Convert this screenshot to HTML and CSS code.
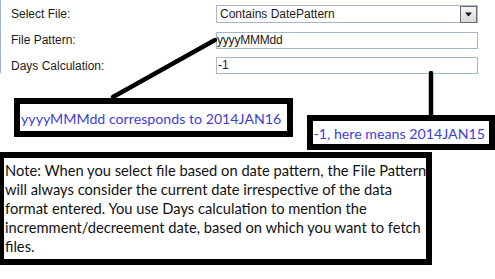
FILE: index.html
```html
<!DOCTYPE html>
<html>
<head>
<meta charset="utf-8">
<link rel="stylesheet" href="styles.css">
</head>
<body>
<div class="page">
  <div class="form">
    <div class="label">Select File:</div>
    <div class="select">
      <span class="select-text">Contains DatePattern</span>
      <span class="select-btn"><svg width="9" height="5" viewBox="0 0 9 5"><path d="M1 0.5 H8 L4.5 4.5 Z" fill="#111"/></svg></span>
    </div>
    <div class="label">File Pattern:</div>
    <div class="input first">yyyyMMMdd</div>
    <div class="label">Days Calculation:</div>
    <div class="input">-1</div>
  </div>
  <div class="callouts">
    <div class="callout one">yyyyMMMdd corresponds to 2014JAN16</div>
    <div class="callout two">-1, here means 2014JAN15</div>
  </div>
  <div class="note">Note: When you select file based on date pattern, the File Pattern<br>will always consider the current date irrespective of the data<br>format entered. You use Days calculation to mention the<br>incremment/decreement date, based on which you want to fetch<br>files.</div>
  <svg class="arrows" width="495" height="279" viewBox="0 0 495 279">
    <line x1="113" y1="97" x2="215" y2="40" stroke="#000" stroke-width="4.5" stroke-linecap="round"/>
    <line x1="431" y1="73" x2="431" y2="115" stroke="#000" stroke-width="4.5" stroke-linecap="round"/>
  </svg>
</div>
</body>
</html>
```
FILE: styles.css
```css
html, body {
  margin: 0;
  padding: 0;
  background: #fff;
}
.page {
  position: relative;
  width: 495px;
  height: 279px;
  overflow: hidden;
}
.form {
  display: grid;
  grid-template-columns: 204px 262px;
  grid-template-rows: 18px 17px 17px;
  row-gap: 8.5px;
  align-items: center;
  padding: 5px 0 0 11px;
  height: 73px;
  box-sizing: border-box;
  border-left: 1px solid #9fb4d6;
  margin-bottom: 5px;
  font-family: "Liberation Sans", Arial, sans-serif;
  font-size: 12px;
  color: #1a1a1a;
}
.form .label {
  margin-left: -1px;
}
.select {
  height: 18px;
  box-sizing: border-box;
  border: 1px solid #a7b7cb;
  display: flex;
  align-items: center;
  justify-content: space-between;
  padding-left: 3px;
}
.select-btn {
  width: 17px;
  height: 17px;
  box-sizing: border-box;
  margin-right: 0;
  border: 1px solid #6d6d6d;
  background: linear-gradient(#f4f4f4, #d8d8d8);
  display: flex;
  align-items: center;
  justify-content: center;
}
.input {
  height: 17px;
  box-sizing: border-box;
  border: 1px solid #a7b7cb;
  padding-left: 1px;
  line-height: 15px;
}
.input.first {
  padding-left: 0;
  letter-spacing: -0.2px;
}
.callouts {
  display: flex;
  align-items: flex-start;
  height: 74px;
}
.callout {
  border: 6px solid #000;
  box-sizing: border-box;
  font-family: Lato, "Noto Sans", sans-serif;
  font-size: 14.2px;
  color: #4040dc;
  white-space: nowrap;
  overflow: hidden;
}
.callout.one {
  margin: 20px 0 0 14px;
  width: 281px;
  height: 39px;
  padding: 6px 0 0 1px;
}
.callout.two {
  margin: 37px 0 0 14px;
  width: 190px;
  height: 35px;
  padding: 4px 0 0 1px;
}
.note {
  margin-left: -2px;
  width: 434px;
  height: 113px;
  box-sizing: border-box;
  border: 6px solid #000;
  padding: 3px 0 0 1px;
  font-family: Lato, "Noto Sans", sans-serif;
  font-size: 14.7px;
  line-height: 19px;
  color: #111;
  white-space: nowrap;
  overflow: hidden;
}
.arrows {
  position: absolute;
  left: 0;
  top: 0;
  pointer-events: none;
}
```
